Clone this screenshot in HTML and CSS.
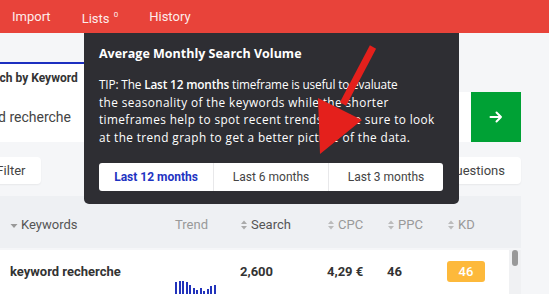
FILE: index.html
```html
<!DOCTYPE html>
<html>
<head>
<meta charset="utf-8">
<link rel="stylesheet" href="styles.css">
</head>
<body>
<nav class="nav">
  <span class="nav-item">Import</span>
  <span class="nav-item">Lists <sup class="count">0</sup></span>
  <span class="nav-item">History</span>
</nav>
<main class="main">
  <section class="search">
    <div class="tab">Search by Keyword</div>
    <div class="input-row">
      <div class="input">keyword recherche</div>
      <button class="go">
        <svg width="14" height="14" viewBox="0 0 14 14"><path d="M1.5 7H12M7.5 2.5L12 7l-4.5 4.5" fill="none" stroke="#fff" stroke-width="2" stroke-linecap="round" stroke-linejoin="round"/></svg>
      </button>
    </div>
  </section>
  <div class="filters">
    <span class="chip">Add Filter</span>
    <span class="chip">Only questions</span>
  </div>
  <section class="table">
    <div class="thead">
      <span class="th th-dark"><svg class="caret" width="8" height="10" viewBox="0 0 8 10"><path d="M0.5 4h7L4 8z" fill="#999"/></svg>Keywords</span>
      <span class="th">Trend</span>
      <span class="th th-dark"><svg class="sort" width="8" height="10" viewBox="0 0 8 10"><path d="M1 4h6L4 0.5zM1 6h6L4 9.5z" fill="#aaa"/></svg>Search</span>
      <span class="th"><svg class="sort" width="8" height="10" viewBox="0 0 8 10"><path d="M1 4h6L4 0.5zM1 6h6L4 9.5z" fill="#bbb"/></svg>CPC</span>
      <span class="th"><svg class="sort" width="8" height="10" viewBox="0 0 8 10"><path d="M1 4h6L4 0.5zM1 6h6L4 9.5z" fill="#bbb"/></svg>PPC</span>
      <span class="th"><svg class="sort" width="8" height="10" viewBox="0 0 8 10"><path d="M1 4h6L4 0.5zM1 6h6L4 9.5z" fill="#bbb"/></svg>KD</span>
    </div>
    <div class="tbody">
      <div class="row">
        <span class="td kw">keyword recherche</span>
        <span class="td trend">
          <span class="bar" style="height:16px"></span>
          <span class="bar" style="height:17px"></span>
          <span class="bar" style="height:17px"></span>
          <span class="bar" style="height:16px"></span>
          <span class="bar" style="height:13px"></span>
          <span class="bar" style="height:10px"></span>
          <span class="bar" style="height:8px"></span>
          <span class="bar" style="height:10px"></span>
          <span class="bar" style="height:7px"></span>
          <span class="bar" style="height:9px"></span>
          <span class="bar" style="height:12px"></span>
          <span class="bar" style="height:13px"></span>
        </span>
        <span class="td num">2,600</span>
        <span class="td num">4,29 €</span>
        <span class="td num">46</span>
        <span class="td"><span class="badge">46</span></span>
      </div>
      <div class="scrollbar"><span class="thumb"></span></div>
    </div>
  </section>
</main>
<div class="tooltip">
  <div class="tt-title">Average Monthly Search Volume</div>
  <p class="tt-text"><span class="tt-first">TIP: The <b>Last 12 months</b> timeframe is useful to evaluate</span><br>the seasonality of the keywords while the shorter<br>timeframes help to spot recent trends. Make sure to look<br>at the trend graph to get a better picture of the data.</p>
  <div class="seg">
    <span class="seg-btn active">Last 12 months</span>
    <span class="seg-btn">Last 6 months</span>
    <span class="seg-btn">Last 3 months</span>
  </div>
</div>
<svg class="pointer" width="549" height="294" viewBox="0 0 549 294">
  <path d="M373 47L343 104" stroke="#e4201c" stroke-width="7" fill="none"/>
  <path d="M318 98L362 120L320 154Z" fill="#e4201c"/>
</svg>
</body>
</html>
```

FILE: styles.css
```css
* { box-sizing: border-box; }
html, body { margin: 0; padding: 0; }
body {
  width: 549px;
  height: 294px;
  overflow: hidden;
  background: #f5f6f8;
  font-family: Roboto, "Liberation Sans", sans-serif;
  position: relative;
}
.nav {
  height: 33px;
  background: #e8433a;
  display: flex;
  align-items: center;
  gap: 31px;
  padding-left: 12px;
}
.nav-item {
  color: #fdeceb;
  font-size: 13px;
  line-height: 33px;
}
.count {
  font-size: 8px;
  vertical-align: 6px;
  margin-left: 1px;
}
.main {
  width: 521px;
  padding-top: 29px;
}
.search {
  margin-left: -60px;
}
.tab {
  width: 260px;
  height: 30px;
  background: #fff;
  border-top: 2px solid #1d2fc0;
  font-size: 12px;
  font-weight: 700;
  color: #333;
  padding-left: 35px;
  line-height: 29px;
}
.input-row {
  display: flex;
  height: 50px;
}
.input {
  flex: 1;
  background: #fff;
  font-size: 14px;
  color: #444;
  line-height: 50px;
  padding-left: 14px;
}
.go {
  width: 50px;
  height: 50px;
  border: 0;
  padding: 0;
  background: #00a135;
  display: flex;
  align-items: center;
  justify-content: center;
}
.filters {
  display: flex;
  justify-content: space-between;
  margin-left: -46px;
  margin-top: 15px;
  height: 27px;
}
.chip {
  background: #fff;
  border-radius: 4px;
  font-size: 13px;
  color: #444;
  line-height: 27px;
  padding: 0 16px;
  box-shadow: 0 1px 2px rgba(0,0,0,0.06);
}
.table {
  margin-top: 12px;
}
.thead {
  height: 52px;
  background: #eef0f3;
  display: grid;
  grid-template-columns: 165px 65px 87px 60px 60px 1fr;
  padding-left: 10px;
  align-items: center;
  padding-top: 5px;
}
.th {
  font-size: 13px;
  color: #999;
  display: flex;
  align-items: center;
}
.th-dark { color: #555; }
.caret, .sort { margin-right: 3px; }
.tbody {
  display: flex;
  margin-top: 2px;
  height: 60px;
}
.row {
  flex: 1;
  background: #fff;
  display: grid;
  grid-template-columns: 165px 65px 87px 60px 60px 1fr;
  padding-left: 10px;
  align-items: start;
  padding-top: 11px;
}
.td {
  font-size: 13px;
  font-weight: 700;
  color: #333;
  line-height: 21px;
}
.trend {
  display: flex;
  align-items: flex-end;
  gap: 1.5px;
  height: 37px;
}
.bar {
  width: 2px;
  background: #2233bb;
}
.badge {
  display: inline-block;
  width: 38px;
  height: 21px;
  border-radius: 3px;
  background: #fdb93b;
  color: #fff;
  font-weight: 500;
  text-align: center;
  line-height: 21px;
}
.scrollbar {
  width: 12px;
  background: #f0f1f3;
  display: flex;
  justify-content: center;
}
.thumb {
  width: 6px;
  height: 16px;
  border-radius: 3px;
  background: #999;
}
.tooltip {
  position: absolute;
  left: 84px;
  top: 33px;
  width: 375px;
  height: 171px;
  background: #2e2e33;
  border-radius: 0 0 5px 5px;
  padding: 12px 15px 0 15px;
  color: #fff;
  font-family: "Open Sans", sans-serif;
}
.tt-title {
  font-size: 12.5px;
  font-weight: 700;
  line-height: 18px;
}
.tt-text {
  margin: 13px 0 0 0;
  font-size: 11.8px;
  letter-spacing: 0.4px;
  line-height: 17.5px;
  white-space: nowrap;
}
.tt-first { letter-spacing: -0.15px; }
.tt-text b { font-weight: 600; }
.seg {
  display: flex;
  margin-top: 17px;
  width: 344px;
  height: 28px;
  background: #fff;
  border-radius: 3px;
  overflow: hidden;
}
.seg-btn {
  flex: 1;
  text-align: center;
  line-height: 28px;
  font-family: Roboto, sans-serif;
  font-size: 12px;
  color: #444;
  border-left: 1px solid #e8e8ea;
}
.seg-btn:first-child { border-left: 0; }
.seg-btn.active { color: #1e33c2; font-weight: 700; }
.pointer {
  position: absolute;
  left: 0;
  top: 0;
  pointer-events: none;
}
```
